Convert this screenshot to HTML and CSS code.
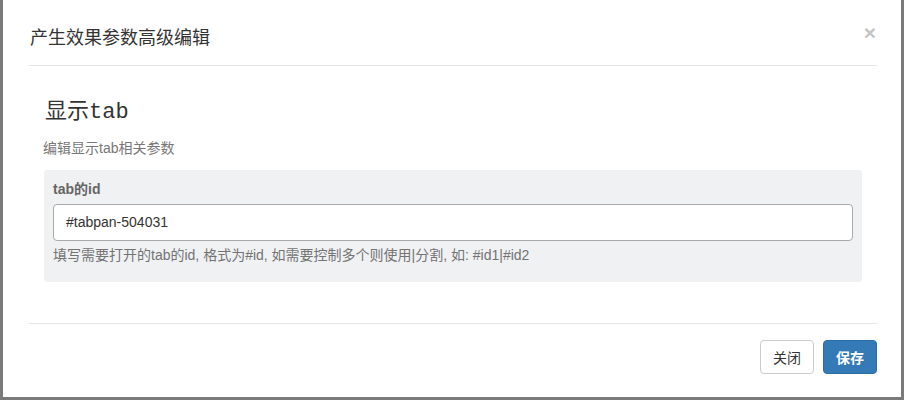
FILE: index.html
```html
<!DOCTYPE html>
<html lang="zh">
<head>
<meta charset="utf-8">
<title>产生效果参数高级编辑</title>
<link rel="stylesheet" href="styles.css">
</head>
<body>
<div class="modal">
  <div class="modal-header">
    <h4 class="modal-title">产生效果参数高级编辑</h4>
    <span class="close">×</span>
  </div>
  <div class="modal-body">
    <h3 class="section-title">显示tab</h3>
    <p class="section-desc">编辑显示tab相关参数</p>
    <div class="field-panel">
      <label class="field-label">tab的id</label>
      <div class="field-input">#tabpan-504031</div>
      <p class="field-help">填写需要打开的tab的id, 格式为#id, 如需要控制多个则使用|分割, 如: #id1|#id2</p>
    </div>
  </div>
  <div class="modal-footer">
    <button class="btn btn-default">关闭</button>
    <button class="btn btn-primary">保存</button>
  </div>
</div>
</body>
</html>
```
FILE: styles.css
```css
* { box-sizing: border-box; }
html, body { margin: 0; padding: 0; }
body {
  background: #7a7a7a;
  font-family: "Liberation Sans", "Noto Sans CJK SC", sans-serif;
  font-size: 14px;
  color: #333;
  width: 904px;
  height: 400px;
  overflow: hidden;
}
.modal {
  margin: 0 3px;
  height: 397px;
  background: #fff;
  display: flex;
  flex-direction: column;
}
.modal-header {
  margin: 0 24px 0 26px;
  padding: 27px 0 16px 1px;
  border-bottom: 1px solid #e5e5e5;
  display: flex;
  justify-content: space-between;
  align-items: center;
}
.modal-title {
  margin: 0;
  font-size: 18px;
  line-height: 22px;
  font-weight: normal;
  color: #333;
}
.close {
  font-size: 21px;
  font-weight: bold;
  line-height: 22px;
  color: #c4c4c4;
  margin-top: -10px;
  margin-right: 1px;
}
.modal-body {
  padding: 0 39px 0 41px;
}
.section-title {
  margin: 32px 0 0 1px;
  font-family: "Liberation Mono", "Noto Sans CJK SC", monospace;
  font-size: 22px;
  line-height: 30px;
  font-weight: normal;
  color: #333;
}
.section-desc {
  margin: 10px 0 0 -1px;
  line-height: 20px;
  color: #777;
}
.field-panel {
  margin-top: 12px;
  background: #f0f1f3;
  border-radius: 3px;
  padding: 9px 9px 17px 9px;
}
.field-label {
  display: block;
  font-weight: bold;
  line-height: 20px;
  color: #666;
}
.field-input {
  margin-top: 5px;
  height: 37px;
  border: 1px solid #aaa;
  border-radius: 4px;
  background: #fff;
  padding: 0 12px;
  line-height: 35px;
  color: #333;
}
.field-help {
  margin: 4px 0 0 0;
  line-height: 20px;
  color: #737373;
}
.modal-footer {
  margin: 41px 24px 0 26px;
  border-top: 1px solid #e5e5e5;
  padding-top: 16px;
  display: flex;
  justify-content: flex-end;
  gap: 9px;
}
.btn {
  font-family: "Liberation Sans", "Noto Sans CJK SC", sans-serif;
  font-size: 14px;
  height: 34px;
  width: 54px;
  padding: 0;
  border-radius: 4px;
  border: 1px solid #ccc;
  cursor: pointer;
}
.btn-default {
  background: #fff;
  color: #333;
}
.btn-primary {
  background: #337ab7;
  border-color: #2e6da4;
  color: #fff;
  font-weight: bold;
}
```
